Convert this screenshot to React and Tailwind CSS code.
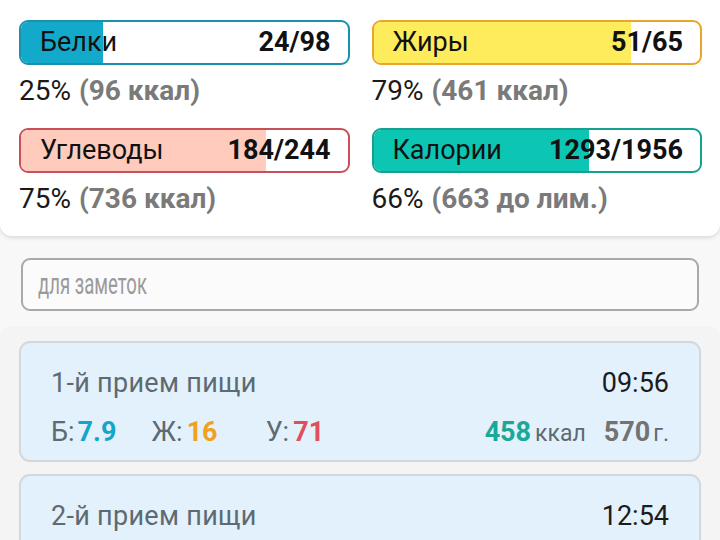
import React from 'react';

const bars = [
  { label: 'Белки', value: '24/98', pct: 25, note: '25%', extra: '(96 ккал)', fill: 'bg-[#13a9cb]', border: 'border-[#1c90aa]' },
  { label: 'Жиры', value: '51/65', pct: 79, note: '79%', extra: '(461 ккал)', fill: 'bg-[#ffec5c]', border: 'border-[#e8a62c]' },
  { label: 'Углеводы', value: '184/244', pct: 75, note: '75%', extra: '(736 ккал)', fill: 'bg-[#ffcbbd]', border: 'border-[#c8505a]' },
  { label: 'Калории', value: '1293/1956', pct: 66, note: '66%', extra: '(663 до лим.)', fill: 'bg-[#0cc5b3]', border: 'border-[#15a08f]' },
];

const meals = [
  { title: '1-й прием пищи', time: '09:56', p: '7.9', f: '16', c: '71', kcal: '458', grams: '570' },
  { title: '2-й прием пищи', time: '12:54', p: '12', f: '9.4', c: '55', kcal: '352', grams: '410' },
];

const Bar = ({ bar }) => (
  <div>
    <div className={`relative h-[45px] rounded-[9px] border-2 ${bar.border} bg-white overflow-hidden`}>
      <div className={`absolute left-0 top-0 bottom-0 ${bar.fill}`} style={{ width: `${bar.pct}%` }} />
      <div className="relative flex h-full items-center justify-between pl-[19px] pr-[17px] text-[27px] text-[#111]">
        <span>{bar.label}</span>
        <span className="font-bold">{bar.value}</span>
      </div>
    </div>
    <div className="mt-[8px] h-[36px] flex items-center text-[28px] text-[#1a1a1a]">
      <span>{bar.note}</span>
      <span className="ml-[8px] font-bold text-[#7a7a7a]">{bar.extra}</span>
    </div>
  </div>
);

const MealCard = ({ meal }) => (
  <div className="rounded-[11px] border-2 border-[#d3d8dc] bg-[#e3f1fc] px-[30px] pt-[22px] pb-[10px]">
    <div className="flex h-[36px] items-center justify-between text-[27px]">
      <span className="tracking-[0.3px] text-[#5d6a71]">{meal.title}</span>
      <span className="text-[#1c1c1c]">{meal.time}</span>
    </div>
    <div className="mt-[13px] flex h-[36px] items-center justify-between text-[27px] text-[#5d6a71]">
      <div className="flex items-center">
        <span>Б:</span>
        <span className="ml-[3px] w-[74px] font-bold text-[#14a6c9]">{meal.p}</span>
        <span>Ж:</span>
        <span className="ml-[4px] w-[79px] font-bold text-[#f2a11f]">{meal.f}</span>
        <span>У:</span>
        <span className="ml-[4px] font-bold text-[#e0505a]">{meal.c}</span>
      </div>
      <div className="flex items-baseline">
        <span className="font-bold text-[#1ba897]">{meal.kcal}</span>
        <span className="ml-[4px] text-[23px]">ккал</span>
        <span className="ml-[18px] font-bold text-[#737373]">{meal.grams}</span>
        <span className="ml-[3px] text-[23px]">г.</span>
      </div>
    </div>
  </div>
);

const App = () => {
  return (
    <div className="h-[540px] w-[720px] overflow-hidden bg-[#f8f8f8]" style={{ fontFamily: 'Roboto, "Noto Sans", sans-serif' }}>
      <div className="rounded-b-[12px] bg-white pl-[19px] pr-[18px] pt-[20px] pb-[19px] shadow-[0_2px_4px_rgba(0,0,0,0.12)]">
        <div className="grid grid-cols-2 gap-x-[22px] gap-y-[19px]">
          {bars.map((bar) => (
            <Bar key={bar.label} bar={bar} />
          ))}
        </div>
      </div>

      <div className="px-[21px] pt-[22px] pb-[15px]">
        <div className="flex h-[53px] items-center overflow-hidden rounded-[9px] border-2 border-[#a9a9a9] bg-[#fbfbfb] px-[15px]">
          <input
            type="text"
            placeholder="для заметок"
            className="w-[156%] shrink-0 origin-left scale-x-[0.64] bg-transparent text-[29px] text-[#333] placeholder:text-[#9a9a9a] outline-none"
          />
        </div>
      </div>

      <div className="rounded-t-[10px] bg-[#f4f4f4] px-[19px] pt-[15px]">
        <div className="flex flex-col gap-[12px]">
          {meals.map((meal) => (
            <MealCard key={meal.title} meal={meal} />
          ))}
        </div>
      </div>
    </div>
  );
};

export default App;
